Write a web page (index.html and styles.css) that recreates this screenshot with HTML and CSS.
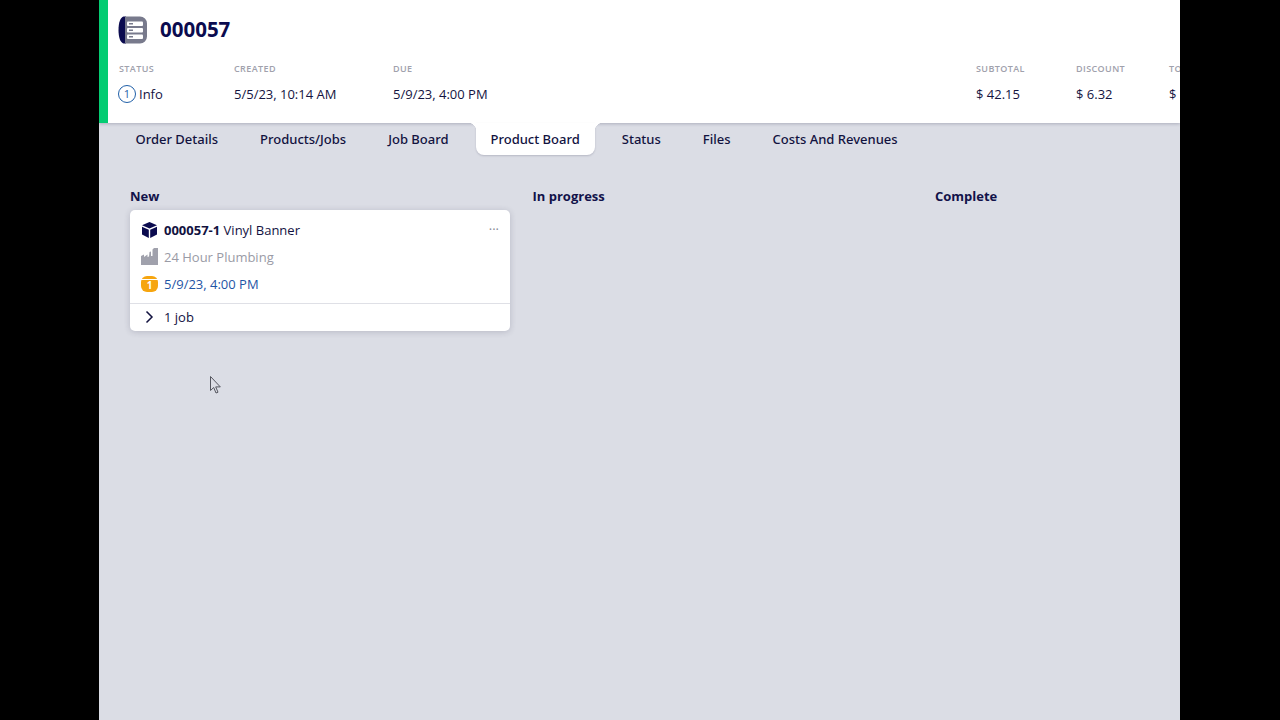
FILE: index.html
```html
<!DOCTYPE html>
<html lang="en">
<head>
<meta charset="utf-8">
<title>Order 000057</title>
<link rel="stylesheet" href="styles.css">
</head>
<body>
<div class="app">
  <header class="header">
    <div class="title-row">
      <svg class="order-icon" width="29" height="28" viewBox="0 0 29 28">
        <path d="M8 0.5H5.5C2.5 1.5 0.5 6 0.5 14s2 12.500 5 13.500H8z" fill="#0b0b4f"/>
        <path d="M7 0.500H22a7 7 0 0 1 7 7v13a7 7 0 0 1-7 7H7z" fill="#787a8c"/>
        <rect x="9" y="5.500" width="16" height="4.500" rx="1" fill="#fff"/>
        <rect x="9" y="12" width="16" height="4.500" rx="1" fill="#fff"/>
        <rect x="9" y="18.500" width="16" height="4.500" rx="1" fill="#fff"/>
        <rect x="11" y="7" width="4" height="1.500" fill="#787a8c"/>
        <rect x="11" y="13.500" width="4" height="1.500" fill="#787a8c"/>
        <rect x="11" y="20" width="4" height="1.500" fill="#787a8c"/>
      </svg>
      <h1 class="order-no">000057</h1>
    </div>
    <div class="meta">
      <div class="meta-item"><div class="meta-label">STATUS</div>
        <div class="meta-value status">
          <span class="status-dot">1</span><span>Info</span>
        </div></div>
      <div class="meta-item"><div class="meta-label">CREATED</div><div class="meta-value">5/5/23, 10:14 AM</div></div>
      <div class="meta-item"><div class="meta-label">DUE</div><div class="meta-value">5/9/23, 4:00 PM</div></div>
      <div class="meta-item"><div class="meta-label">SUBTOTAL</div><div class="meta-value">$ 42.15</div></div>
      <div class="meta-item"><div class="meta-label">DISCOUNT</div><div class="meta-value">$ 6.32</div></div>
      <div class="meta-item meta-clipped"><div class="meta-label">TO</div><div class="meta-value">$</div></div>
    </div>
  </header>
  <nav class="tabs">
    <a class="tab">Order Details</a>
    <a class="tab">Products/Jobs</a>
    <a class="tab">Job Board</a>
    <a class="tab active">Product Board</a>
    <a class="tab">Status</a>
    <a class="tab">Files</a>
    <a class="tab">Costs And Revenues</a>
  </nav>
  <main class="board">
    <section class="col">
      <h2 class="col-title">New</h2>
      <article class="card">
        <div class="card-body">
          <div class="card-row">
            <svg class="row-icon" width="17" height="16" viewBox="0 0 17 16">
              <path d="M8.500 0 16 3.200 8.500 6.500 1 3.200z" fill="#0b0b4f"/>
              <path d="M1 4.800 7.800 7.800V16L1 12.500z" fill="#0b0b4f"/>
              <path d="M16 4.800 9.200 7.800V16l6.800-3.500z" fill="#0b0b4f"/>
            </svg>
            <span><b class="strong">000057-1</b> Vinyl Banner</span>
            <span class="dots">···</span>
          </div>
          <div class="card-row muted">
            <svg class="row-icon" width="17" height="17" viewBox="0 0 17 17">
              <path d="M0 17V8L3 6.500V9L6.500 6.500V9L8 8.500 8.500 4 10 3.500V17zM11.500 17V1.500L13 0H17V17z" fill="#a0a1ac"/>
              <rect x="8" y="8" width="4" height="9" fill="#a0a1ac"/>
            </svg>
            <span>24 Hour Plumbing</span>
          </div>
          <div class="card-row due">
            <span class="due-badge">1</span>
            <span>5/9/23, 4:00 PM</span>
          </div>
        </div>
        <div class="card-foot">
          <svg class="row-icon" width="16" height="16" viewBox="0 0 16 16">
            <path d="M5 2.500 10.500 8 5 13.500" fill="none" stroke="#12123f" stroke-width="1.500"/>
          </svg>
          <span>1 job</span>
        </div>
      </article>
    </section>
    <section class="col">
      <h2 class="col-title">In progress</h2>
    </section>
    <section class="col">
      <h2 class="col-title">Complete</h2>
    </section>
  </main>
  <svg class="cursor" width="12" height="19" viewBox="0 0 12 19">
    <path d="M.5.5v14l3.200-3 2.300 5.500 2-.8-2.300-5.300h4.600z" fill="#dcdde5" stroke="#55565f"/>
  </svg>
</div>
</body>
</html>
```
FILE: styles.css
```css
* { box-sizing: border-box; }
html, body { margin: 0; height: 100%; }
body {
  background: #000;
  font-family: "Open Sans", "Noto Sans", sans-serif;
  color: #12123f;
  overflow: hidden;
}
.app {
  position: relative;
  width: 1081px;
  height: 720px;
  margin-left: 99px;
  background: #dbdde5;
  overflow: hidden;
}
.header {
  height: 123px;
  background: #fff;
  border-left: 9px solid #04cc72;
  padding: 15px 0 0 11px;
  box-shadow: 0 1px 3px rgba(40, 40, 70, .25);
  position: relative;
  z-index: 1;
}
.title-row { display: flex; align-items: center; gap: 13px; height: 29px; }
.order-icon { display: block; margin-left: -1px; }
.order-no { margin: 0 0 1px; font-size: 20.500px; line-height: 28px; font-weight: 700; color: #0b0b4f; }
.meta {
  display: grid;
  grid-template-columns: 115px 159px 583px 100px 93px 11px;
  margin-top: 18px;
}
.meta-label {
  font-size: 9px;
  line-height: 13px;
  font-weight: 600;
  letter-spacing: .4px;
  color: #a0a1ac;
  white-space: nowrap;
}
.meta-value {
  margin-top: 9px;
  font-size: 13px;
  line-height: 20px;
  color: #14143f;
  white-space: nowrap;
}
.status { display: flex; align-items: center; gap: 3px; margin-left: -1px; }
.status-dot {
  width: 18px;
  height: 18px;
  border: 1.300px solid #1f5fa8;
  border-radius: 50%;
  font-size: 11px;
  line-height: 15px;
  text-align: center;
  color: #1f5fa8;
}
.tabs {
  display: flex;
  gap: 12px;
  padding-left: 21.500px;
  height: 32px;
}
.tab {
  position: relative;
  padding: 0 15px;
  font-family: "Noto Sans", "Open Sans", sans-serif;
  font-size: 13px;
  font-weight: 500;
  line-height: 33px;
  color: #12123f;
  white-space: nowrap;
}
.tab.active {
  z-index: 2;
  background: #fff;
  border-radius: 0 0 8px 8px;
  box-shadow: 0 1px 2px rgba(40, 40, 70, .2);
}
.tab.active::before,
.tab.active::after {
  content: "";
  position: absolute;
  top: 0;
  width: 8px;
  height: 8px;
}
.tab.active::before {
  left: -8px;
  background: radial-gradient(circle at 0 100%, transparent 8px, #fff 8.500px);
}
.tab.active::after {
  right: -8px;
  background: radial-gradient(circle at 100% 100%, transparent 8px, #fff 8.500px);
}
.board {
  display: grid;
  grid-template-columns: repeat(3, 380px);
  gap: 22.500px;
  padding: 32px 0 0 31px;
}
.col-title {
  margin: 0 0 5px;
  font-size: 13px;
  line-height: 18px;
  font-weight: 700;
  color: #12124a;
}
.card {
  background: #fff;
  border-radius: 5px;
  box-shadow: 0 1px 6px rgba(40, 40, 70, .2);
  font-size: 13px;
  color: #12123f;
}
.card-body { padding: 6px 11px; border-bottom: 1px solid #dfe0e6; }
.card-row { display: flex; align-items: center; gap: 6px; height: 27px; }
.row-icon { flex: none; display: block; width: 17px; }
.strong { font-weight: 700; }
.dots { margin-left: auto; color: #8a8b98; position: relative; top: -1px; }
.muted { color: #9a9ba6; }
.due { color: #1f55a5; }
.due-badge {
  flex: none;
  width: 17px;
  height: 16px;
  border-radius: 6px;
  background: linear-gradient(#f6a50f 0 3px, #fff 3px 4px, #f6a50f 4px);
  color: #fff;
  font-size: 10px;
  line-height: 18px;
  font-weight: 700;
  text-align: center;
}
.card-foot { display: flex; align-items: center; gap: 6px; height: 27px; padding: 0 11px 1px; }
.cursor { position: absolute; left: 111px; top: 376px; z-index: 3; }
```
